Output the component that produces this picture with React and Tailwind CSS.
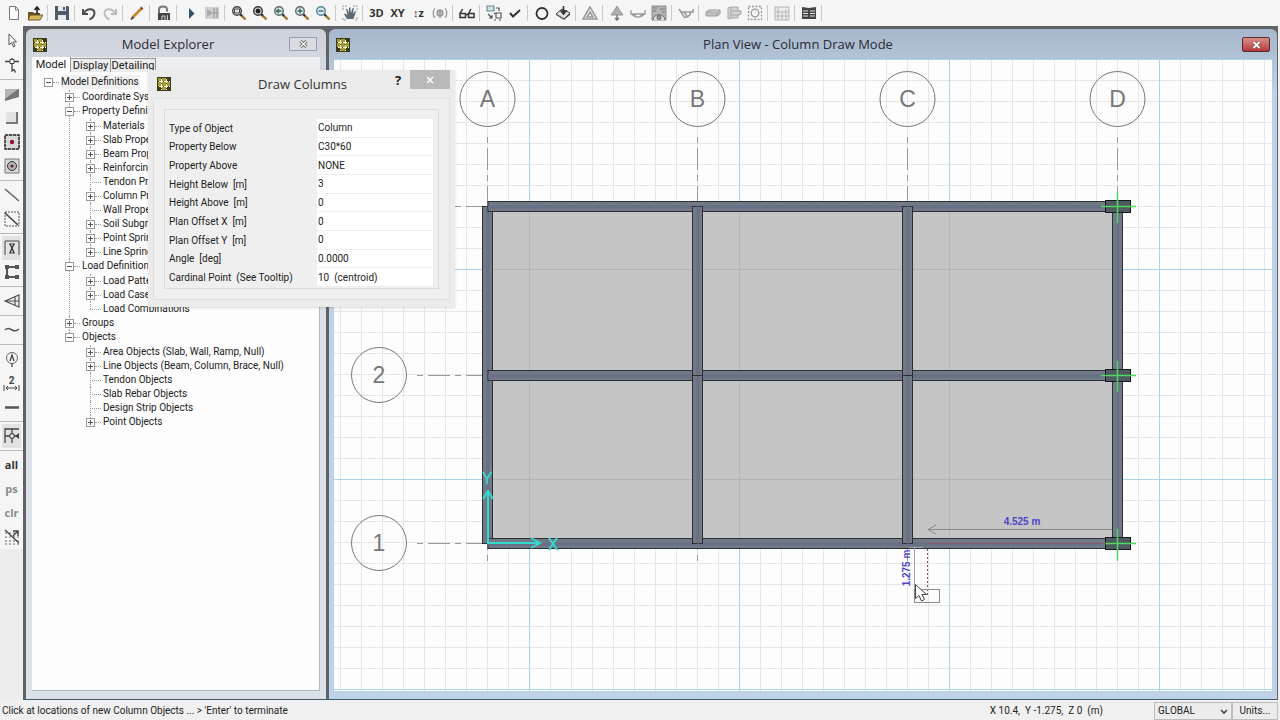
import clsx from "clsx";

const GRID_X = [154, 364, 574, 784];
const GRID_Y = [147, 316, 484];

const dark = { fill: "none", stroke: "#333", strokeWidth: 1.5 };
const gray = { fill: "none", stroke: "#999", strokeWidth: 1.3 };

const lens = (stroke, inner) => (
  <>
    <path d="M9.5 9.5l5 5" stroke="#a9702f" strokeWidth="2.4" fill="none" />
    <path d="M9 9l2 2" stroke="#333" strokeWidth="2" />
    <circle cx="6" cy="6" r="4.3" fill="#dfe6e6" stroke={stroke} strokeWidth="1.4" />
    {inner}
  </>
);

const TOOLBAR = [
  [
    { label: "New", art: <path d="M3.5 1.5h6l3 3v10h-9zM9.500 1.500v3.500h3" fill="#fdfdfd" stroke="#777" /> },
    {
      label: "Open",
      art: (
        <>
          <path d="M1 7h5l1 1h6v7H1z" fill="#6b5426" />
          <path d="M3 10h13l-3 5H1z" fill="#d9b65a" stroke="#54431f" strokeWidth=".8" />
          <path d="M10 9V3M7.500 5L10 2l2.500 3" fill="none" stroke="#222" strokeWidth="1.6" />
        </>
      ),
    },
  ],
  [
    {
      label: "Save",
      art: (
        <>
          <path d="M1 1h13l1 1v13H1z" fill="#4f5b68" />
          <path d="M4 1h8v5H4zM4 10h8v5H4z" fill="#e6ebee" />
          <path d="M9 2h2v3H9z" fill="#4f5b68" />
        </>
      ),
    },
  ],
  [
    { label: "Undo", art: <path d="M2 4v5h5M2.500 8.500C6 3 13 3 13.500 8c0 3-2 5-5 6.500" fill="none" stroke="#4d4d4d" strokeWidth="2" /> },
    { label: "Redo", art: <path d="M14 4v5H9M13.500 8.500C10 3 3 3 2.500 8c0 3 2 5 5 6.500" fill="none" stroke="#bdbdbd" strokeWidth="2" /> },
  ],
  [
    {
      label: "Edit",
      art: (
        <>
          <path d="M3 13L13 3" stroke="#c9822f" strokeWidth="2.600" />
          <path d="M2 14.500l2.500-2.500" stroke="#333" strokeWidth="1.600" />
          <path d="M12 4l1.500-1.500" stroke="#8a4b28" strokeWidth="2.600" />
        </>
      ),
    },
  ],
  [
    {
      label: "Unlock",
      art: (
        <>
          <path d="M3 8V4.500C3 .5 11 .5 11 4.500v2" fill="none" stroke="#777" strokeWidth="2" />
          <path d="M2 8h12v7H2z" fill="#444" />
          <path d="M6 15v-4h3v4M11.500 10v5" fill="none" stroke="#ccc" />
        </>
      ),
    },
  ],
  [
    { label: "Run", art: <path d="M6 3l5.500 5.500L6 14z" fill="#31536f" /> },
    {
      label: "Results",
      art: (
        <>
          <path d="M1 2h14v12H1z" fill="#d0d0d0" />
          <path d="M3 4l6 4-6 4z" fill="#aaa" />
          <path d="M10 3v10M13 3v10M9 8h6" stroke="#a2a2a2" strokeWidth="1.300" />
        </>
      ),
    },
  ],
  [
    { label: "Rubber band zoom", art: lens("#444", <path d="M3.500 4h5v4h-5z" fill="none" stroke="#444" />) },
    { label: "Full view", art: lens("#333", <circle cx="6" cy="6" r="2.500" fill="#222" />) },
    { label: "Previous zoom", art: lens("#5b6b6b", <path d="M3.500 6h5M6 4L3.500 6 6 8" fill="none" stroke="#2e6b62" strokeWidth="1.300" />) },
    { label: "Zoom in", art: lens("#5b6b6b", <path d="M3.500 6h5M6 3.500v5" stroke="#2e6b62" strokeWidth="1.300" />) },
    { label: "Zoom out", art: lens("#4e8a9a", <path d="M3.500 6h5" stroke="#2e6b78" strokeWidth="1.300" />) },
  ],
  [
    {
      label: "Pan",
      art: (
        <>
          <path d="M1 5V1h4M11 1h4v4M15 12v3h-3M4 15H1v-3" fill="none" stroke="#9a9a9a" strokeDasharray="2 1" />
          <path d="M5 14l-3-5 1-.5L5.500 10 4 4l1.200-.3L7 8V2.500h1.300L9 8l1.600-5 1.200.3L11 9l2-3 1 .6L11.500 14z" fill="#5c6b76" />
        </>
      ),
    },
  ],
  [
    { label: "3D", text: "3D" },
    { label: "XY", text: "XY" },
    { label: "Up Z", text: "↕z" },
    {
      label: "Rotate",
      art: (
        <g {...gray}>
          <circle cx="8" cy="8" r="3" fill="#bbb" />
          <path d="M3 3.500C.5 6 .5 10 3 13M13 3.500c2.500 2.500 2.500 6.500 0 9M8 5v8" />
        </g>
      ),
    },
  ],
  [
    {
      label: "Perspective",
      art: (
        <g {...dark}>
          <path d="M1 8.500h5.500v4H1zM9.500 8.500H15v4H9.500zM6.500 9.500h3M1 8.500L3.500 4M9.500 8.500L12 4" />
        </g>
      ),
    },
  ],
  [
    {
      label: "Object options",
      art: (
        <g fill="none" stroke="#555" strokeWidth="1.200">
          <path d="M1 1h7v5H1z" fill="#cfe0e6" stroke="#6f8f9a" />
          <path d="M10 3h3v3M2 9l4 4M6 10v3H3M10 8h5v5h-5zM8 15h2M13 15h2M9 9L8 8" />
        </g>
      ),
    },
    { label: "Check", art: <path d="M3 8l3 3.500L13 5" {...dark} strokeWidth="2" /> },
  ],
  [
    { label: "Circle", art: <circle cx="8" cy="8.500" r="5.500" {...dark} strokeWidth="1.800" /> },
    {
      label: "Assign",
      art: (
        <>
          <path d="M1 9l6-5 8 4-6 6z" fill="#ddd" stroke="#444" />
          <path d="M9 14l6-6v2l-6 5-8-5V9z" fill="#555" />
          <path d="M8.500 1v7M6 6l2.500 3L11 6z" fill="#333" stroke="#333" strokeWidth="1.500" />
        </>
      ),
    },
  ],
  [{ label: "Undeformed shape", art: <path d="M8 2L1 14h14zM8 7l-3 5h6z" {...gray} strokeWidth="1.500" /> }],
  [
    {
      label: "Loads",
      art: (
        <>
          <path d="M8 1L5 6l-3 4h12l-3-4z" fill="#b0b0b0" stroke="#959595" />
          <path d="M8 10v5M6 13l2 2 2-2" fill="none" stroke="#777" strokeWidth="1.500" />
        </>
      ),
    },
    { label: "Deformed shape", art: <path d="M1 5v4h14V5M2 9c3 4 9 4 12 0M5 9v3M11 9v3" {...gray} /> },
    {
      label: "Contours",
      art: (
        <>
          <path d="M1 1h14v14H1z" fill="#b5b5b5" stroke="#8a8a8a" />
          <path d="M2 15c0-7 12-7 12 0" fill="#ddd" stroke="#666" />
          <circle cx="8" cy="12.500" r="2" fill="#999" stroke="#666" />
          <path d="M2 3h4M9 4h5M2 6h3M11 7h3" stroke="#777" />
        </>
      ),
    },
  ],
  [{ label: "Forces", art: <path d="M1 4l2 3h12V4M3 7l3 5c3 1 6-1 7-5M6 7l3 4" {...gray} strokeWidth="1.500" /> }],
  [
    { label: "Beam design", art: <path d="M1 7l3-2h11v4l-3 2H1zM1 7h11l3-2M12 7v4" fill="#c2c2c2" stroke="#a0a0a0" /> },
    { label: "Slab design", art: <path d="M2 3l3-1h7v3l3 1v3l-3 1v3H5l-3 1zM5 2v12M5 6h8M5 10h8" fill="#d2d2d2" stroke="#aaa" /> },
    {
      label: "Punching",
      art: (
        <g {...gray}>
          <path d="M1.500 1.500h13v13h-13z" strokeDasharray="2 1.500" />
          <circle cx="8" cy="8" r="3.800" />
        </g>
      ),
    },
  ],
  [{ label: "Report", art: <path d="M1 2h14v13H1zM4 2v13M8 7v8M12 4v11M1 11h14M1 7h14" fill="#ededed" stroke="#b5b5b5" /> }],
  [
    {
      label: "Tables",
      art: (
        <>
          <path d="M1 2l7 1 7-1v12H1z" fill="#444" />
          <path d="M2 6h5M2 8.500h5M2 11h5M9 6h5M9 8.500h5M9 11h5" stroke="#e2e2e2" />
        </>
      ),
    },
  ],
];

const plate = <path d="M1 1h14v14H1z" fill="#d9d9d9" stroke="#777" />;

const SIDEBAR = [
  [
    { label: "Select", art: <path d="M5 1v11l2.500-2.500L9.500 14l1.500-1-2-4h3.500z" fill="#fff" stroke="#555" /> },
    {
      label: "Reshape",
      art: (
        <>
          <path d="M1 4.500h14M8 1v6" stroke="#444" strokeWidth="1.500" />
          <path d="M6 2.500h4v4H6z" fill="#fff" stroke="#444" />
          <path d="M8 7v7l2-1.500 1.500 3" fill="none" stroke="#444" strokeWidth="1.300" />
        </>
      ),
    },
  ],
  [
    {
      label: "Draw slab",
      art: (
        <>
          <path d="M1 3h14v8L1 15z" fill="#777" />
          <path d="M1 3h13L1 13z" fill="#b4b4b4" />
        </>
      ),
    },
    {
      label: "Draw rectangular slab",
      art: (
        <>
          <path d="M2 2h12v12H2z" fill="#777" />
          <path d="M2 2h10v10H2z" fill="#e2e2e2" />
        </>
      ),
    },
    {
      label: "Quick slab",
      art: (
        <>
          {plate}
          <path d="M1 1h14v14H1z" fill="none" stroke="#333" strokeWidth="1.500" strokeDasharray="3 1" />
          <circle cx="8" cy="8" r="2.200" fill="#8c1830" />
        </>
      ),
    },
    {
      label: "Slab around point",
      art: (
        <>
          {plate}
          <circle cx="8" cy="8" r="4.500" fill="#b5b5b5" stroke="#333" />
          <circle cx="8" cy="8" r="1.600" fill="#6f1c2c" />
        </>
      ),
    },
  ],
  [
    { label: "Draw beam", art: <path d="M1 2l14 12" stroke="#666" strokeWidth="1.600" /> },
    {
      label: "Quick beam",
      art: (
        <>
          <path d="M1 1h14v14H1z" fill="none" stroke="#555" strokeDasharray="2 1" />
          <path d="M1 2l13 12" stroke="#444" strokeWidth="1.600" />
        </>
      ),
    },
  ],
  [
    {
      label: "Draw columns",
      active: true,
      art: (
        <>
          <path d="M1 1v14M15 1v14M1 1h14M5 4h6M5 13h6" fill="none" stroke="#444" />
          <path d="M6 4l2 4 2-4M6 13l2-5 2 5" fill="none" stroke="#333" strokeWidth="1.300" />
        </>
      ),
    },
    {
      label: "Draw walls",
      art: (
        <>
          <path d="M13 3H3v10h10" fill="none" stroke="#555" strokeWidth="2" />
          <path d="M1 1h4v4H1zM11 1h4v4h-4zM1 11h4v4H1zM11 11h4v4h-4z" fill="#555" />
        </>
      ),
    },
  ],
  [{ label: "Draw tendons", art: <path d="M1 8l14-6v12zM15 8H1M11 4v8" fill="#eee" stroke="#555" strokeWidth="1.200" /> }],
  [{ label: "Design strips", art: <path d="M1 8c3-3 5-1 7 0s5 1 7-1" fill="none" stroke="#555" strokeWidth="1.500" /> }],
  [
    {
      label: "Grid line",
      art: (
        <>
          <circle cx="8" cy="7" r="5.500" fill="none" stroke="#666" />
          <path d="M6 10l2-6 2 6M8 12.500V16" fill="none" stroke="#444" strokeWidth="1.300" />
        </>
      ),
    },
    { label: "Dimension", dimension: "2" },
    { label: "Design line", art: <path d="M1 8.500h14" stroke="#555" strokeWidth="2.500" /> },
  ],
  [
    {
      label: "Snap",
      active: true,
      art: (
        <>
          <path d="M1 15V1h14M8 1v14M1 8h14" fill="none" stroke="#444" strokeWidth="1.300" />
          <path d="M6 6h4v4H6z" fill="#eee" stroke="#444" />
          <path d="M11 8l4-3v6z" fill="#444" />
        </>
      ),
    },
  ],
  [
    { label: "Select all", text: "all" },
    { label: "Previous selection", text: "ps", muted: true },
    { label: "Clear selection", text: "clr", muted: true },
    {
      label: "Intersecting line select",
      art: (
        <>
          <path d="M1 4h14M1 8h14M1 12h14M1 15h14" stroke="#666" strokeDasharray="2 2" />
          <path d="M1 1l14 13M9 2h5v5M14 2l-5 5" fill="none" stroke="#444" strokeWidth="1.300" />
        </>
      ),
    },
  ],
];

const leaf = (name) => ({ name, leaf: true });
const shut = (name) => ({ name });

const TREE = [
  {
    name: "Model Definitions",
    selected: true,
    children: [
      shut("Coordinate Systems"),
      {
        name: "Property Definitions",
        children: [
          shut("Materials"),
          shut("Slab Properties"),
          shut("Beam Properties"),
          shut("Reinforcing Bar Sizes"),
          leaf("Tendon Properties"),
          shut("Column Properties"),
          leaf("Wall Properties"),
          shut("Soil Subgrades"),
          shut("Point Springs"),
          shut("Line Springs"),
        ],
      },
      {
        name: "Load Definitions",
        children: [shut("Load Patterns"), shut("Load Cases"), leaf("Load Combinations")],
      },
      shut("Groups"),
      {
        name: "Objects",
        children: [
          shut("Area Objects (Slab, Wall, Ramp, Null)"),
          shut("Line Objects (Beam, Column, Brace, Null)"),
          leaf("Tendon Objects"),
          leaf("Slab Rebar Objects"),
          leaf("Design Strip Objects"),
          shut("Point Objects"),
        ],
      },
    ],
  },
];

const FIELDS = [
  ["Type of Object", "Column"],
  ["Property Below", "C30*60"],
  ["Property Above", "NONE"],
  ["Height Below  [m]", "3"],
  ["Height Above  [m]", "0"],
  ["Plan Offset X  [m]", "0"],
  ["Plan Offset Y  [m]", "0"],
  ["Angle  [deg]", "0.0000"],
  ["Cardinal Point  (See Tooltip)", "10  (centroid)"],
];

function ToolIcon({ item }) {
  if (item.text) {
    return (
      <span
        className={clsx(
          "font-['Open_Sans',sans-serif] text-[11px] leading-4 font-bold",
          item.muted ? "text-[#8b8b8b]" : "text-[#333]"
        )}
      >
        {item.text}
      </span>
    );
  }
  if (item.dimension) {
    return (
      <span className="flex flex-col items-center text-[10px] leading-[9px] font-bold text-[#444]">
        {item.dimension}
        <svg width="17" height="6" viewBox="0 0 17 6">
          <path d="M1 0v6M16 0v6M3 3h11M5 1L3 3l2 2M12 1l2 2-2 2" fill="none" stroke="#444" />
        </svg>
      </span>
    );
  }
  return (
    <svg width="16" height="16" viewBox="0 0 16 16">
      {item.art}
    </svg>
  );
}

function Toolbar() {
  return (
    <div role="toolbar" aria-label="Main" className="flex h-[26px] shrink-0 items-center bg-[#f5f5f6] pl-[3px]">
      {TOOLBAR.map((group, i) => (
        <div key={i} className="flex items-center">
          {group.map((item) => (
            <button key={item.label} aria-label={item.label} className="flex h-5 w-[21px] items-center justify-center">
              <ToolIcon item={item} />
            </button>
          ))}
          <span className="mr-[3px] ml-[2px] h-4 w-px bg-[#c9c9c9]" />
        </div>
      ))}
    </div>
  );
}

function Sidebar() {
  return (
    <div className="w-[23px] shrink-0 bg-[#ededed]">
      <div role="toolbar" aria-label="Draw" className="bg-[#f5f5f6] pt-[3px]">
        {SIDEBAR.map((group, i) => (
          <div key={i} className={clsx("px-[2px]", i > 0 && "mt-[2px] border-t border-[#bcbcbc] pt-[2px]")}>
            {group.map((item) => (
              <button
                key={item.label}
                aria-label={item.label}
                className={clsx("flex h-6 w-full items-center justify-center", item.active && "bg-[#e2e2e2]")}
              >
                <ToolIcon item={item} />
              </button>
            ))}
          </div>
        ))}
      </div>
    </div>
  );
}

function AppIcon() {
  return (
    <svg width="14" height="14" viewBox="0 0 14 14">
      <path d="M0 0h14v14H0z" fill="#3d3a1c" />
      <path d="M1 1h3v3H1zM5 5h4v4H5zM10 5h3v4h-3zM5 10h4v3H5zM5 1h4v3H5zM1 5h3v4H1z" fill="#a49c34" />
      <path d="M4.500 2v11M9.500 2v11M2 4.500h11M2 9.500h11" stroke="#f6f3d2" strokeDasharray="4 1" />
    </svg>
  );
}

function TreeNode({ node, depth, last }) {
  return (
    <li className="relative">
      {depth > 0 && (
        <span
          className={clsx(
            "absolute top-0 left-1 border-l border-dotted border-[#9a9a9a]",
            last ? "h-[7px]" : "h-full"
          )}
        />
      )}
      <div className="flex h-[14px] items-center whitespace-nowrap">
        {node.leaf ? (
          <span className="mr-[2px] ml-1 w-[11px] border-t border-dotted border-[#9a9a9a]" />
        ) : (
          <>
            <button
              aria-label={(node.children ? "Collapse " : "Expand ") + node.name}
              className="relative flex size-[9px] items-center justify-center border border-[#9a9a9a] bg-white"
            >
              <svg width="5" height="5" viewBox="0 0 5 5">
                <path d={node.children ? "M0 2.5h5" : "M0 2.5h5M2.5 0v5"} stroke="#555" />
              </svg>
            </button>
            <span className="mr-[2px] w-[6px] border-t border-dotted border-[#9a9a9a]" />
          </>
        )}
        <span className={clsx("pr-px", node.selected && "bg-[#f1f1f1]")}>{node.name}</span>
      </div>
      {node.children && (
        <ul className="pt-px pl-[21px]">
          {node.children.map((child, i) => (
            <TreeNode key={child.name} node={child} depth={depth + 1} last={i === node.children.length - 1} />
          ))}
        </ul>
      )}
    </li>
  );
}

function ModelExplorer() {
  return (
    <section className="flex w-[300px] shrink-0 flex-col rounded-t-md bg-linear-to-b from-[#cdd1d9] to-[#dbe1e8] to-10% px-[6px] pb-2">
      <header className="flex h-7 shrink-0 items-center pt-[3px] pl-px">
        <AppIcon />
        <h2 className="flex-1 text-center font-['Open_Sans',sans-serif] text-[13px] text-[#2b2b33]">Model Explorer</h2>
        <button
          aria-label="Close explorer"
          className="mr-[3px] mb-[2px] flex h-[14px] w-7 items-center justify-center border border-[#9ba0aa] bg-[#d9dce2]"
        >
          <svg width="9" height="8" viewBox="0 0 9 8">
            <path d="M1.500 1l6 6M7.500 1l-6 6" stroke="#555" strokeWidth="3" />
            <path d="M1.500 1l6 6M7.500 1l-6 6" stroke="#fff" strokeWidth="1.300" />
          </svg>
        </button>
      </header>
      <div role="tablist" className="flex h-[15px] shrink-0 items-end bg-[#eceef1] text-[11px] leading-[14px] text-[#222]">
        <button role="tab" aria-selected="true" className="h-[15px] w-[39px] border-r border-[#999] bg-white">
          Model
        </button>
        <button role="tab" aria-selected="false" className="h-[14px] w-10 border-t border-r border-[#999] bg-[#ececec]">
          Display
        </button>
        <button role="tab" aria-selected="false" className="h-[14px] w-[45px] border-t border-r border-[#999] bg-[#ececec]">
          Detailing
        </button>
      </div>
      <div className="min-h-0 flex-1 overflow-hidden border-r border-b border-[#b4b9c0] bg-[#fdfdfd] pt-[3px] pl-3 text-[10px] leading-[14px] text-[#222]">
        <ul>
          {TREE.map((node) => (
            <TreeNode key={node.name} node={node} depth={0} last />
          ))}
        </ul>
      </div>
    </section>
  );
}

function GridBubble({ x, y, children }) {
  return (
    <g>
      <circle cx={x} cy={y} r="27.500" fill="none" stroke="#777" />
      <text x={x} y={y + 8} textAnchor="middle" fontSize="23" fill="#777">
        {children}
      </text>
    </g>
  );
}

function Beam({ x, y, width, height }) {
  const long = width > height;
  return (
    <g>
      <rect x={x} y={y} width={width} height={height} fill="#737a86" stroke="#2b2f38" />
      <rect
        x={long ? x : x + 4}
        y={long ? y + 4 : y}
        width={long ? width : 3}
        height={long ? 3 : height}
        fill="#667086"
      />
    </g>
  );
}

function PlanDrawing() {
  const [left, , , right] = GRID_X;
  const [top, , bottom] = GRID_Y;
  return (
    <svg className="block h-full w-full font-['Liberation_Sans',Arial,sans-serif]">
      <defs>
        <pattern id="minor" x="6" y="0" width="21" height="21" patternUnits="userSpaceOnUse">
          <path d="M.5 0v21M0 .5h21" stroke="#e3e6ea" />
        </pattern>
        <pattern id="major" x="195" y="0" width="210" height="210" patternUnits="userSpaceOnUse">
          <path d="M.5 0v210M0 .5h210" stroke="#a9d4ea" />
        </pattern>
      </defs>
      <rect width="100%" height="100%" fill="url(#minor)" />
      <rect width="100%" height="100%" fill="url(#major)" />

      <g stroke="#999" strokeDasharray="6 5 22 5">
        {GRID_X.map((x) => (
          <path key={x} d={`M${x - 0.5} 78V505`} />
        ))}
        {GRID_Y.map((y) => (
          <path key={y} d={`M83 ${y + 0.5}H790`} />
        ))}
      </g>

      <rect x={left} y={top} width={right - left} height={bottom - top} fill="#c5c5c5" />
      <path
        d={`M${left} 210.500H${right}M${left} 420.500H${right}M195.500 ${top}V${bottom}M405.500 ${top}V${bottom}M615.500 ${top}V${bottom}`}
        stroke="#b3b5b6"
      />

      {[left, right].map((x) => (
        <Beam key={x} x={x - 5.5} y={top + 0.5} width={10} height={bottom - top} />
      ))}
      {GRID_Y.map((y) => (
        <Beam key={y} x={left} y={y - 4.5} width={right - left} height={10} />
      ))}
      {[GRID_X[1], GRID_X[2]].map((x) => (
        <Beam key={x} x={x - 5.5} y={top + 0.5} width={10} height={bottom - top} />
      ))}
      <path d={`M${GRID_X[1] - 6} 316.500h11M${GRID_X[2] - 6} 316.500h11`} stroke="#2b2f38" />

      {GRID_Y.map((y) => (
        <g key={y}>
          <rect x={right - 12.5} y={y - 5.5} width="25" height="12" fill="#4f5a60" stroke="#15191d" />
          <path d={`M${right - 17} ${y + 0.5}h35M${right - 0.5} ${y - 14}v31`} stroke="#4fd65c" strokeWidth="1.500" />
        </g>
      ))}

      {["A", "B", "C", "D"].map((name, i) => (
        <GridBubble key={name} x={GRID_X[i] - 0.5} y={40}>
          {name}
        </GridBubble>
      ))}
      <GridBubble x={45} y={316}>2</GridBubble>
      <GridBubble x={45} y={484}>1</GridBubble>

      <g fill="none" stroke="#35d8cf" strokeWidth="2">
        <path d="M154 432v52h51M149 440l5-8 5 8M197 479l9 5-9 5" />
      </g>
      <g fontSize="16" fill="#35d8cf" stroke="#35d8cf" strokeWidth=".4" textAnchor="middle">
        <text x="153" y="425">Y</text>
        <text x="219" y="491">X</text>
      </g>

      <path d="M594 470.500h184M602 466l-8 4.500 8 4.500" fill="none" stroke="#8a8a8a" />
      <path d="M580.500 488v43M575 488.500h14" fill="none" stroke="#a5a5a5" />
      <path d="M594 484.500h178" stroke="#8a5a70" />
      <path d="M593.500 490v46" stroke="#95456a" strokeDasharray="2 2" />
      <g fontSize="10" fontWeight="bold" fill="#5145c4" textAnchor="middle">
        <text x="688" y="466">4.525 m</text>
        <text transform="translate(576 509) rotate(-90)">1.275 m</text>
      </g>
      <rect x="580.500" y="530.500" width="25" height="13" fill="none" stroke="#8c8c8c" />
      <path d="M581.500 525.500v14l3.500-3 2.500 5.500 3-1.500-2.500-5h4.500z" fill="#fff" stroke="#444" />
    </svg>
  );
}

function PlanView() {
  return (
    <section className="ml-[3px] flex min-w-0 flex-1 flex-col rounded-t-md bg-linear-to-b from-[#a7b7cb] to-[#bfd2e8] to-10% px-[5px] pb-2">
      <header className="flex h-[30px] shrink-0 items-center pt-px pl-[2px]">
        <AppIcon />
        <h1 className="flex-1 pl-1 text-center font-['Open_Sans',sans-serif] text-[13px] text-[#2b2b33]">
          Plan View - Column Draw Mode
        </h1>
        <button
          aria-label="Close plan view"
          className="mr-[2px] flex h-[15px] w-7 items-center justify-center rounded-xs border border-[#5c2a2e] bg-linear-to-b from-[#d98c8c] to-[#b8383c]"
        >
          <svg width="9" height="8" viewBox="0 0 9 8">
            <path d="M1.500 1l6 6M7.500 1l-6 6" stroke="#6b3a3a" strokeWidth="3" />
            <path d="M1.500 1l6 6M7.500 1l-6 6" stroke="#fff" strokeWidth="1.800" />
          </svg>
        </button>
      </header>
      <div className="min-h-0 flex-1 overflow-hidden bg-[#fdfdfe]">
        <PlanDrawing />
      </div>
    </section>
  );
}

function DrawColumnsDialog() {
  return (
    <div
      role="dialog"
      aria-labelledby="draw-columns-title"
      className="absolute top-[70px] left-[148px] w-[307px] bg-[#ebebeb] px-[5px] pb-[7px] shadow-sm"
    >
      <header className="flex h-7 items-start">
        <span className="mt-[7px] ml-1">
          <AppIcon />
        </span>
        <h2
          id="draw-columns-title"
          className="mt-1 flex-1 pl-20 text-center font-['Open_Sans',sans-serif] text-[13px] leading-5 text-[#333]"
        >
          Draw Columns
        </h2>
        <button
          aria-label="Help"
          className="ml-9 w-4 font-['Open_Sans',sans-serif] text-[13px] leading-5 font-bold text-[#222]"
        >
          ?
        </button>
        <button aria-label="Close dialog" className="ml-1 flex h-[19px] w-10 items-center justify-center bg-[#b9b9b9]">
          <svg width="8" height="8" viewBox="0 0 8 8">
            <path d="M1 1l6 6M7 1L1 7" stroke="#fff" strokeWidth="1.500" />
          </svg>
        </button>
      </header>
      <form className="border border-[#e0e0e0] bg-[#efefef] p-[10px]">
        <div className="grid h-[180px] auto-rows-fr grid-cols-[148px_1fr] border border-[#dcdcdc] pt-[9px] pr-[5px] pb-px pl-1 text-[10px] text-[#222]">
          {FIELDS.map(([label, value], i) => (
            <div key={label} className="col-span-2 grid grid-cols-subgrid">
              <label htmlFor={`field-${i}`} className="flex items-center whitespace-pre">
                {label}
              </label>
              <input
                id={`field-${i}`}
                defaultValue={value}
                className="min-w-0 border-b border-[#efefef] bg-white pl-px outline-none"
              />
            </div>
          ))}
        </div>
      </form>
    </div>
  );
}

function StatusBar() {
  return (
    <footer className="flex h-5 shrink-0 items-center bg-[#f0f0f0] pt-[2px] pr-[2px] pl-[2px] text-[10px] leading-4 text-[#222]">
      <span className="flex-1">Click at locations of new Column Objects ... &gt; 'Enter' to terminate</span>
      <span className="mr-[51px] whitespace-pre">X 10.4,  Y -1.275,  Z 0  (m)</span>
      <div className="relative w-[78px]">
        <select
          aria-label="Coordinate system"
          className="block h-[18px] w-full appearance-none border border-[#bdbdbd] bg-[#ececec] pl-[3px]"
        >
          <option>GLOBAL</option>
        </select>
        <svg className="pointer-events-none absolute top-[7px] right-1" width="8" height="6" viewBox="0 0 8 6">
          <path d="M1 1l3 3 3-3" fill="none" stroke="#444" strokeWidth="1.600" />
        </svg>
      </div>
      <button className="h-[18px] w-[46px] border border-[#bdbdbd] bg-[#ececec]">Units...</button>
    </footer>
  );
}

export default function App() {
  return (
    <div className="relative flex h-screen flex-col overflow-hidden bg-[#f0f0f0] font-['Roboto','Liberation_Sans',sans-serif]">
      <Toolbar />
      <main className="flex min-h-0 flex-1">
        <Sidebar />
        <div className="mr-[2px] flex min-w-0 flex-1 border-b border-[#3c5f6b] bg-[#606266] pt-[3px] pr-px pl-[3px]">
          <ModelExplorer />
          <PlanView />
        </div>
      </main>
      <StatusBar />
      <DrawColumnsDialog />
    </div>
  );
}
